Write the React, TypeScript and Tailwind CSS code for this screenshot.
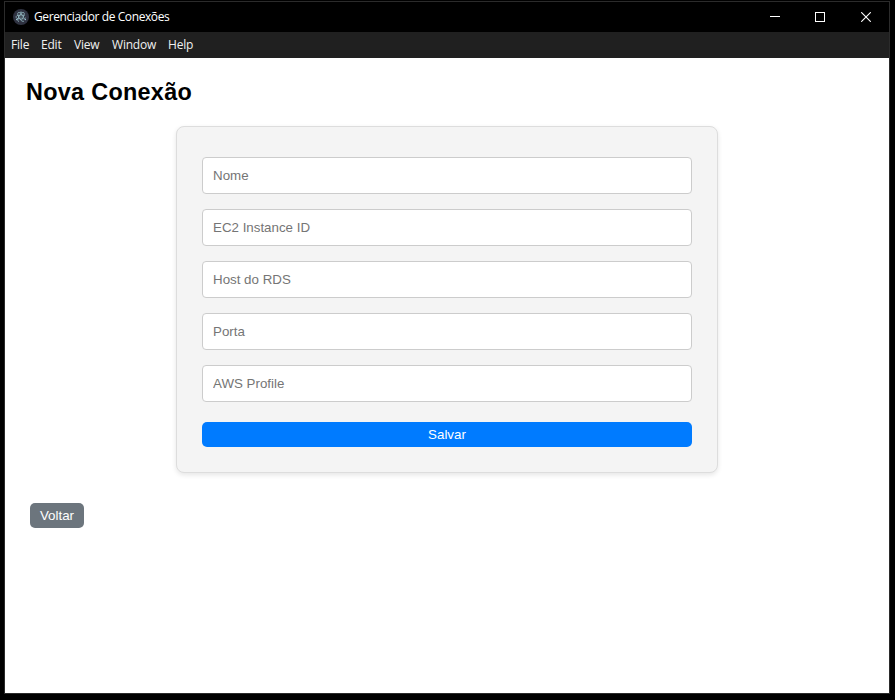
import React from "react";

const menus = [
  { label: "File", width: "w-[30px]" },
  { label: "Edit", width: "w-[33px]" },
  { label: "View", width: "w-[38px]" },
  { label: "Window", width: "w-[56px]" },
  { label: "Help", width: "w-[37px]" },
];

const fields = ["Nome", "EC2 Instance ID", "Host do RDS", "Porta", "AWS Profile"];

function AppIcon() {
  return (
    <svg width="16" height="16" viewBox="0 0 32 32" fill="none">
      <circle cx="16" cy="16" r="16" fill="#2f3241" />
      <g stroke="#a3cdd6" strokeOpacity="0.85" strokeWidth="1.5" strokeLinecap="round">
        <ellipse cx="16" cy="16" rx="10.5" ry="4" strokeDasharray="38 9" strokeDashoffset="-3" />
        <ellipse cx="16" cy="16" rx="10.5" ry="4" strokeDasharray="38 9" transform="rotate(60 16 16)" />
        <ellipse cx="16" cy="16" rx="10.5" ry="4" strokeDasharray="38 9" transform="rotate(120 16 16)" />
      </g>
      <g fill="#a3cdd6">
        <circle cx="16" cy="16" r="1.2" />
        <circle cx="7.5" cy="21" r="1.5" />
        <circle cx="24.5" cy="21" r="1.5" />
        <circle cx="16" cy="6.5" r="1.3" />
      </g>
    </svg>
  );
}

function TitleBar() {
  return (
    <header className="flex h-[30px] items-center bg-black pl-2 text-white">
      <AppIcon />
      <span className="ml-[5px] whitespace-nowrap font-['Open_Sans',sans-serif] text-[12px] leading-4 tracking-[-0.4px]">
        Gerenciador de Conexões
      </span>
      <div className="ml-auto flex">
        <button aria-label="Minimizar" className="flex h-[30px] w-[45px] items-center justify-center">
          <svg width="10" height="10" shapeRendering="crispEdges">
            <rect y="4" width="10" height="1" fill="#fff" />
          </svg>
        </button>
        <button aria-label="Maximizar" className="flex h-[30px] w-[46px] items-center justify-center">
          <svg width="10" height="10" fill="none" stroke="#fff" shapeRendering="crispEdges">
            <rect x="0.5" y="0.5" width="9" height="9" />
          </svg>
        </button>
        <button aria-label="Fechar" className="flex h-[30px] w-[46px] items-center justify-center">
          <svg width="10" height="10" stroke="#fff" strokeWidth="1.1">
            <path d="M0.2 0.2 9.8 9.8M9.8 0.2 0.2 9.8" />
          </svg>
        </button>
      </div>
    </header>
  );
}

function MenuBar() {
  return (
    <nav className="flex h-[26px] items-center bg-[#202020] pl-1.5 font-['Open_Sans',sans-serif] text-[12px] leading-4 tracking-[-0.2px] text-[#f0f0f0]">
      {menus.map((m) => (
        <span key={m.label} className={`${m.width} shrink-0 whitespace-nowrap`}>
          {m.label}
        </span>
      ))}
    </nav>
  );
}

export default function App() {
  return (
    <div className="h-[700px] w-[895px] overflow-hidden bg-black pl-1 pt-px">
      <div className="flex h-[693px] w-[886px] flex-col border border-[#2b2b2b] font-['Liberation_Sans',Arial,sans-serif]">
        <TitleBar />
        <MenuBar />
        <main className="flex-1 bg-white px-5 pt-5">
          <h1 className="h-7 whitespace-nowrap pl-px text-[23.4px] leading-7 font-bold tracking-[0.3px] text-black">
            Nova Conexão
          </h1>
          <form className="mx-auto mt-5 flex h-[347px] w-[542px] flex-col rounded-lg border border-[#ddd] bg-[#f4f4f4] px-[25px] pt-[30px] shadow-[0_2px_5px_rgba(0,0,0,0.1)]">
            <div className="flex flex-col gap-[15px]">
              {fields.map((f) => (
                <input
                  key={f}
                  placeholder={f}
                  className="h-[37px] w-full rounded-[4px] border border-[#ccc] bg-white px-2.5 text-[13.333px] placeholder:text-[#757575]"
                />
              ))}
            </div>
            <button type="button" className="mt-5 h-[25px] rounded-[5px] bg-[#007bff] text-[13.333px] leading-[15px] text-white">
              Salvar
            </button>
          </form>
          <button className="mt-[30px] ml-[5px] block h-[25px] w-[54px] rounded-[5px] bg-[#6c757d] text-[13.333px] leading-[15px] text-white">
            Voltar
          </button>
        </main>
      </div>
    </div>
  );
}
